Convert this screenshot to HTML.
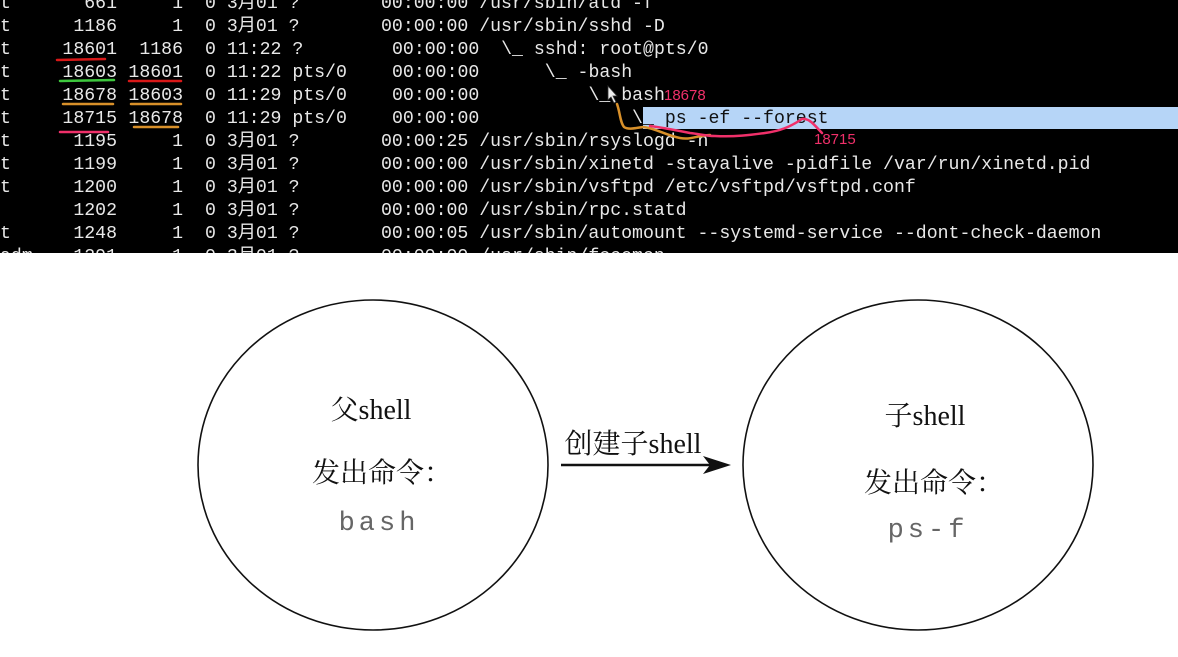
<!DOCTYPE html>
<html><head><meta charset="utf-8"><style>
html,body{margin:0;padding:0;background:#fff;width:1178px;height:657px;overflow:hidden}
svg{display:block}
text{white-space:pre}
.t{font-family:"Liberation Mono","Noto Sans CJK SC",monospace;font-size:18.2px;fill:#e8e8e8}
.s{font-family:"Liberation Serif","Noto Serif CJK SC",serif;font-size:28px;fill:#111}
.m{font-family:"Liberation Mono",monospace;font-size:27px;fill:#666;letter-spacing:4px}
.p{font-family:"Liberation Sans",sans-serif;font-size:15px;fill:#f0306a}
</style></head><body>
<svg width="1178" height="657" viewBox="0 0 1178 657" xmlns="http://www.w3.org/2000/svg" xml:space="preserve">
<rect x="0" y="0" width="1178" height="253" fill="#000"/>
<rect x="643" y="107" width="535" height="22" fill="#b6d5f7"/>
<clipPath id="c"><rect x="0" y="0" width="1178" height="253"/></clipPath>
<g class="t" clip-path="url(#c)">
<text x="0" y="8">t</text><text x="117" y="8" text-anchor="end">661</text><text x="183" y="8" text-anchor="end">1</text><text x="205" y="8">0 3月01 ?</text><text x="381" y="8">00:00:00 /usr/sbin/atd -f</text>
<text x="0" y="31">t</text><text x="117" y="31" text-anchor="end">1186</text><text x="183" y="31" text-anchor="end">1</text><text x="205" y="31">0 3月01 ?</text><text x="381" y="31">00:00:00 /usr/sbin/sshd -D</text>
<text x="0" y="54">t</text><text x="117" y="54" text-anchor="end">18601</text><text x="183" y="54" text-anchor="end">1186</text><text x="205" y="54">0 11:22 ?</text><text x="392" y="54">00:00:00  \_ sshd: root@pts/0</text>
<text x="0" y="77">t</text><text x="117" y="77" text-anchor="end">18603</text><text x="183" y="77" text-anchor="end">18601</text><text x="205" y="77">0 11:22 pts/0</text><text x="392" y="77">00:00:00      \_ -bash</text>
<text x="0" y="100">t</text><text x="117" y="100" text-anchor="end">18678</text><text x="183" y="100" text-anchor="end">18603</text><text x="205" y="100">0 11:29 pts/0</text><text x="392" y="100">00:00:00          \_ bash</text>
<text x="0" y="123">t</text><text x="117" y="123" text-anchor="end">18715</text><text x="183" y="123" text-anchor="end">18678</text><text x="205" y="123">0 11:29 pts/0</text><text x="392" y="123">00:00:00</text>
<text x="632" y="123">\</text><text x="643" y="123" style="fill:#111">_ ps -ef --forest</text>
<text x="0" y="146">t</text><text x="117" y="146" text-anchor="end">1195</text><text x="183" y="146" text-anchor="end">1</text><text x="205" y="146">0 3月01 ?</text><text x="381" y="146">00:00:25 /usr/sbin/rsyslogd -n</text>
<text x="0" y="169">t</text><text x="117" y="169" text-anchor="end">1199</text><text x="183" y="169" text-anchor="end">1</text><text x="205" y="169">0 3月01 ?</text><text x="381" y="169">00:00:00 /usr/sbin/xinetd -stayalive -pidfile /var/run/xinetd.pid</text>
<text x="0" y="192">t</text><text x="117" y="192" text-anchor="end">1200</text><text x="183" y="192" text-anchor="end">1</text><text x="205" y="192">0 3月01 ?</text><text x="381" y="192">00:00:00 /usr/sbin/vsftpd /etc/vsftpd/vsftpd.conf</text>
<text x="117" y="215" text-anchor="end">1202</text><text x="183" y="215" text-anchor="end">1</text><text x="205" y="215">0 3月01 ?</text><text x="381" y="215">00:00:00 /usr/sbin/rpc.statd</text>
<text x="0" y="238">t</text><text x="117" y="238" text-anchor="end">1248</text><text x="183" y="238" text-anchor="end">1</text><text x="205" y="238">0 3月01 ?</text><text x="381" y="238">00:00:05 /usr/sbin/automount --systemd-service --dont-check-daemon</text>
<text x="0" y="261">adm</text><text x="117" y="261" text-anchor="end">1291</text><text x="183" y="261" text-anchor="end">1</text><text x="205" y="261">0 3月01 ?</text><text x="381" y="261">00:00:00 /usr/sbin/fcoemon</text>
</g>
<g stroke-width="2.5" fill="none" stroke-linecap="round">
<path d="M57 60 L105 59" stroke="#d81818"/>
<path d="M60 81 L114 80" stroke="#3ec83e"/>
<path d="M129 81 L181 81" stroke="#d81818"/>
<path d="M63 104 L113 104" stroke="#d8902a"/>
<path d="M131 104 L181 104" stroke="#d8902a"/>
<path d="M134 127 L178 127" stroke="#d8902a"/>
<path d="M60 132 L108 132" stroke="#f0306a"/>
<path d="M617 104 C620 112 620 122 624 127 C628 130 636 128 643 127 C655 128 665 135 680 138 C690 140 695 136 710 135" stroke="#d8902a"/>
<path d="M650 126 C665 128 675 130 690 133 C700 134 705 136 715 136 C735 137 750 135 765 133 C780 131 790 127 802 119 C810 118 815 126 822 133" stroke="#f0306a"/>
</g>
<path d="M608 86 L608 100 L611 97 L614 103 L616 102 L613 96 L617 96 Z" fill="#eee" stroke="#333" stroke-width="0.8"/>
<text class="p" x="664" y="100">18678</text>
<text class="p" x="814" y="144">18715</text>
<ellipse cx="373" cy="465" rx="175" ry="165" fill="none" stroke="#111" stroke-width="1.6"/>
<ellipse cx="918" cy="465" rx="175" ry="165" fill="none" stroke="#111" stroke-width="1.6"/>
<text class="s" x="371" y="419" text-anchor="middle">父shell</text>
<text class="s" x="382" y="482" text-anchor="middle">发出命令：</text>
<text class="m" x="379" y="530" text-anchor="middle">bash</text>
<text class="s" x="925" y="425" text-anchor="middle">子shell</text>
<text class="s" x="934" y="492" text-anchor="middle">发出命令：</text>
<text class="m" x="928" y="537" text-anchor="middle">ps-f</text>
<text class="s" x="633" y="453" text-anchor="middle">创建子shell</text>
<line x1="561" y1="465" x2="712" y2="465" stroke="#111" stroke-width="2.5"/>
<path d="M703 456 L731 465 L703 474 L710 465 Z" fill="#111"/>
</svg>
</body></html>
